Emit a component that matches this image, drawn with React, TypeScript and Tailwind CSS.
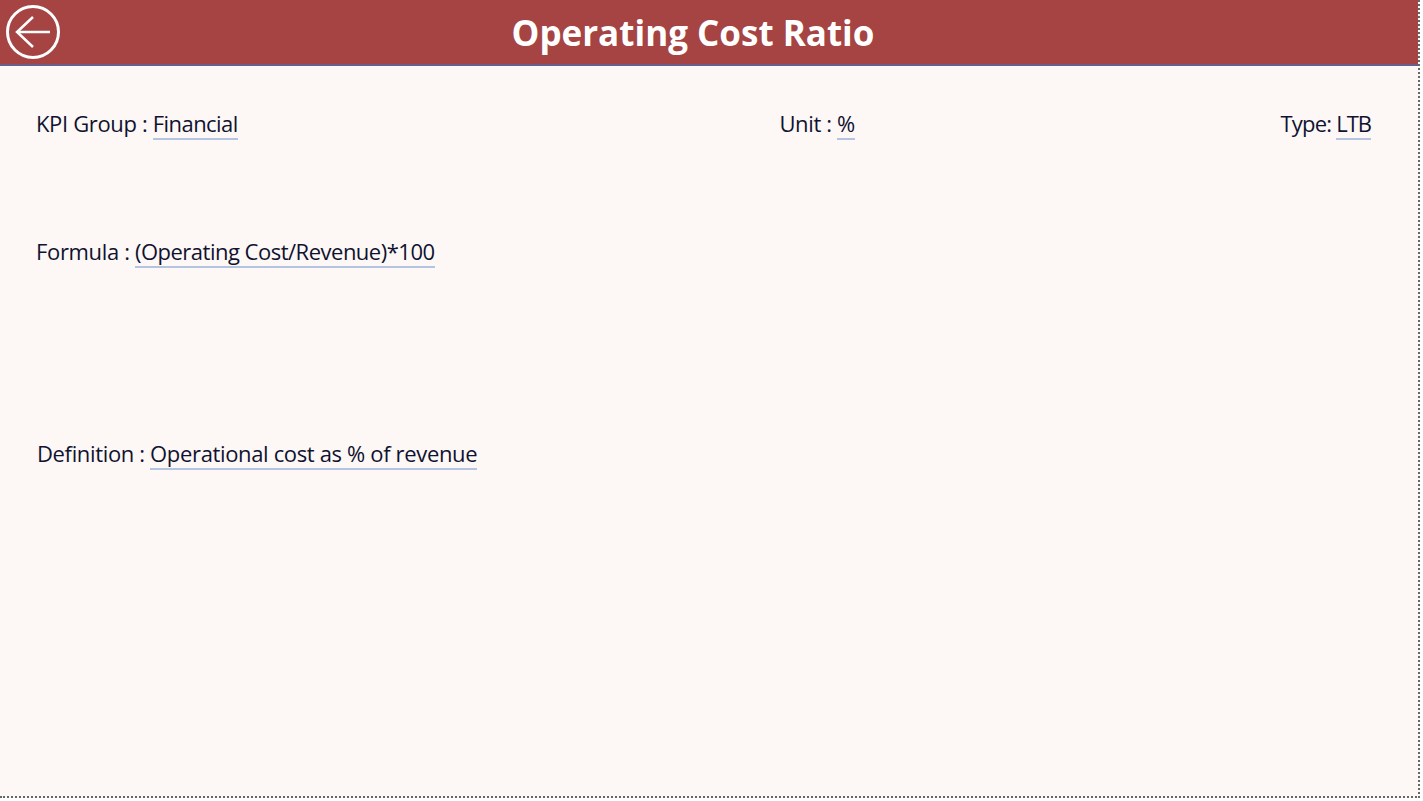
const font = "font-['Open_Sans','Noto_Sans',sans-serif]";

const Value = ({ children, className = "" }: { children: string; className?: string }) => (
  <span className={`border-b-2 border-[#b3c3e0] leading-[30px] inline-block ${className}`}>{children}</span>
);

export default function App() {
  return (
    <div className={`${font} w-[1423px] h-[801px] overflow-hidden bg-white text-[#0f1230] text-[22px] tracking-[-0.35px]`}>
      <div className="w-[1420px] h-[798px] bg-[#fdf8f5] border-r-2 border-b-2 border-dotted border-[#666]">
        <header className="relative h-[66px] bg-[#a54443] border-b-2 border-[#66608a] flex items-center justify-center pr-[32px] pt-[2px]">
          <svg className="absolute left-[6px] top-[5px]" width="54" height="54" viewBox="0 0 54 54" fill="none" stroke="#fff" strokeWidth="3">
            <circle cx="27" cy="27" r="25.5" />
            <path d="M44 27H11M27 12 11 27l16 15" strokeWidth="2.5" />
          </svg>
          <h1 className="text-white text-[35px] font-bold tracking-normal">Operating Cost Ratio</h1>
        </header>
        <div className="flex justify-between pl-[36px] pr-[47px] pt-[41px]">
          <p>KPI Group : <Value className="tracking-[-0.55px]">Financial</Value></p>
          <p className="ml-[116px]">Unit : <Value>%</Value></p>
          <p className="tracking-[-0.8px]">Type: <Value className="tracking-[-1px]">LTB</Value></p>
        </div>
        <p className="pl-[36px] mt-[95px]">Formula : <Value className="tracking-[-0.5px]">(Operating Cost/Revenue)*100</Value></p>
        <p className="pl-[37px] mt-[169px]">Definition : <Value>Operational cost as % of revenue</Value></p>
      </div>
    </div>
  );
}
